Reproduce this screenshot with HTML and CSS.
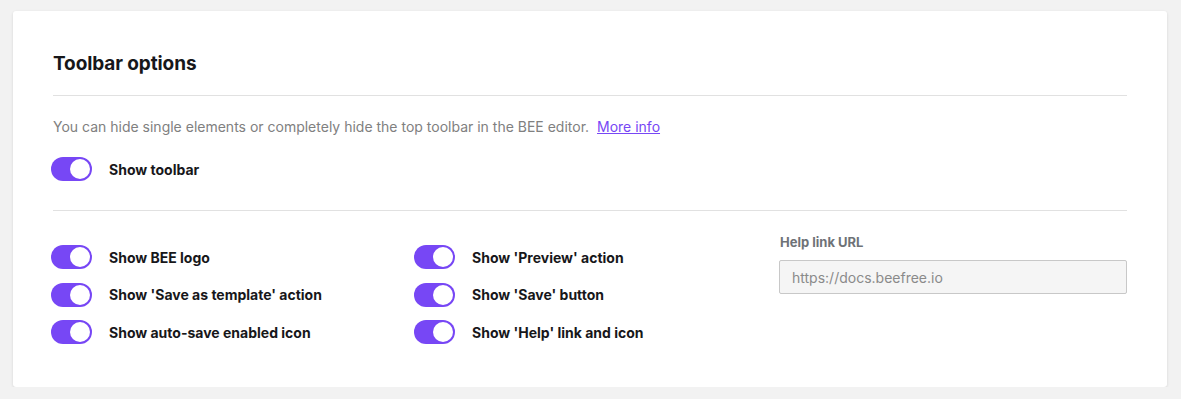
FILE: index.html
```html
<!DOCTYPE html>
<html>
<head>
<meta charset="utf-8">
<link rel="stylesheet" href="styles.css">
</head>
<body>
<div class="card">
  <h2 class="title">Toolbar options</h2>
  <hr class="divider">
  <p class="desc">You can hide single elements or completely hide the top toolbar in the BEE editor. <a href="#" class="link">More info</a></p>
  <div class="row">
    <span class="toggle on"><span class="knob"></span></span>
    <span class="label">Show toolbar</span>
  </div>
  <hr class="divider second">
  <div class="grid">
    <div class="col">
      <div class="row"><span class="toggle on"><span class="knob"></span></span><span class="label">Show BEE logo</span></div>
      <div class="row"><span class="toggle on"><span class="knob"></span></span><span class="label">Show 'Save as template' action</span></div>
      <div class="row"><span class="toggle on"><span class="knob"></span></span><span class="label">Show auto-save enabled icon</span></div>
    </div>
    <div class="col">
      <div class="row"><span class="toggle on"><span class="knob"></span></span><span class="label">Show 'Preview' action</span></div>
      <div class="row"><span class="toggle on"><span class="knob"></span></span><span class="label">Show 'Save' button</span></div>
      <div class="row"><span class="toggle on"><span class="knob"></span></span><span class="label">Show 'Help' link and icon</span></div>
    </div>
    <div class="field">
      <label class="field-label">Help link URL</label>
      <input class="input" type="text" placeholder="https://docs.beefree.io">
    </div>
  </div>
</div>
</body>
</html>
```
FILE: styles.css
```css
* { box-sizing: border-box; }
html, body { margin: 0; padding: 0; }
body {
  background: #f2f2f2;
  font-family: Inter, "Noto Sans", sans-serif;
  padding: 11px 14px 0 13px;
}
.card {
  background: #fff;
  border-radius: 3px;
  box-shadow: 0 1px 3px rgba(0,0,0,0.12);
  padding: 41px 40px 42px 40px;
  height: 376px;
}
.title {
  margin: 0;
  font-size: 19px;
  line-height: 24px;
  font-weight: 700;
  color: #17171a;
  letter-spacing: -0.1px;
}
.divider {
  border: 0;
  border-top: 1px solid #e1e1e1;
  margin: 19px 0 0 0;
}
.desc {
  margin: 21px 0 0 0;
  font-size: 14px;
  line-height: 20px;
  color: #808080;
}
.link {
  color: #7747f5;
  text-decoration: underline;
  margin-left: 4px;
}
.row {
  display: flex;
  align-items: center;
  height: 24px;
  margin-top: 20px;
}
.toggle {
  width: 41px;
  height: 24px;
  border-radius: 12px;
  background: #7747f5;
  display: flex;
  align-items: center;
  justify-content: flex-end;
  padding: 2px;
  margin-left: -2px;
  flex: none;
}
.knob {
  width: 20px;
  height: 20px;
  border-radius: 50%;
  background: #fff;
  box-shadow: 0 0 0 1px rgba(119,71,245,0.4);
}
.label {
  margin-left: 17px;
  font-size: 14px;
  font-weight: 700;
  color: #17171a;
}
.second { margin-top: 29px; }
.grid {
  display: grid;
  grid-template-columns: 363px 365px 347px;
  margin-top: 13px;
}
.col .row { margin-top: 0; margin-bottom: 13.5px; }
.col .row:first-child { margin-top: 21px; }
.field {
  display: flex;
  flex-direction: column;
  margin-top: 10px;
}
.field-label {
  font-size: 13px;
  font-weight: 700;
  color: #6e7277;
  line-height: 16px;
  margin-left: -1px;
}
.input {
  margin-top: 10px;
  margin-left: -2px;
  height: 34px;
  width: 348px;
  border: 1px solid #c8c8c8;
  border-radius: 2px;
  background: #f5f5f5;
  padding: 0 12px;
  font-family: Inter, "Noto Sans", sans-serif;
  font-size: 14px;
  color: #333;
}
.input::placeholder { color: #8a8a8a; }
```
